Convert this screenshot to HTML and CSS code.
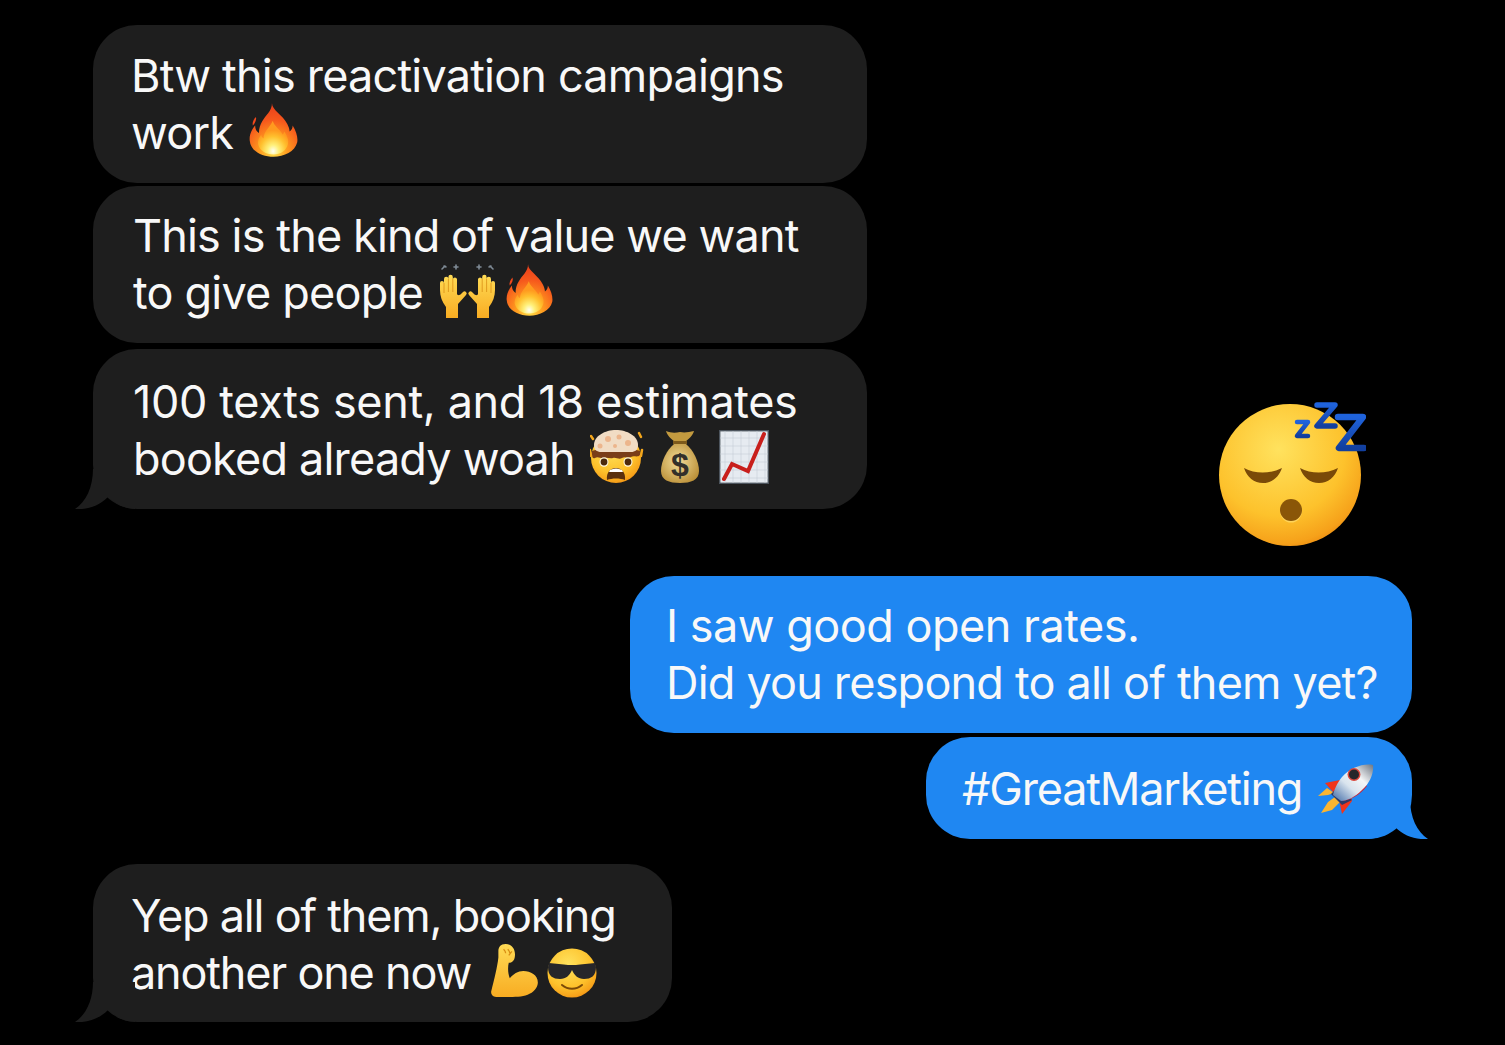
FILE: index.html
```html
<!DOCTYPE html>
<html lang="en">
<head>
  <meta charset="UTF-8">
  <meta name="viewport" content="width=device-width, initial-scale=1.0">
  <title>Messages</title>
  <link rel="stylesheet" href="styles.css">
</head>
<body>

<!-- shared emoji drawings -->
<svg class="defs" aria-hidden="true">
  <defs>
    <radialGradient id="fireOuter" cx="50%" cy="92%" r="95%">
      <stop offset="0" stop-color="#ffe14a"/>
      <stop offset=".3" stop-color="#ff9d1f"/>
      <stop offset=".65" stop-color="#f6581c"/>
      <stop offset="1" stop-color="#e63a1c"/>
    </radialGradient>
    <radialGradient id="fireInner" cx="50%" cy="90%" r="62%">
      <stop offset="0" stop-color="#fffff2"/>
      <stop offset=".3" stop-color="#fff07a"/>
      <stop offset=".7" stop-color="#ffc02e"/>
      <stop offset="1" stop-color="#ff9a1f"/>
    </radialGradient>
    <radialGradient id="face" cx="42%" cy="32%" r="72%">
      <stop offset="0" stop-color="#ffe25e"/>
      <stop offset=".65" stop-color="#fdc22c"/>
      <stop offset=".92" stop-color="#f6a11a"/>
      <stop offset="1" stop-color="#ee8c10"/>
    </radialGradient>
    <linearGradient id="skin" x1="0" y1="0" x2="0" y2="1">
      <stop offset="0" stop-color="#ffdb55"/>
      <stop offset="1" stop-color="#f8ac22"/>
    </linearGradient>
    <radialGradient id="bag" cx="45%" cy="45%" r="65%">
      <stop offset="0" stop-color="#f3dd9a"/>
      <stop offset="1" stop-color="#b98d34"/>
    </radialGradient>
    <linearGradient id="steel" x1="0" y1="1" x2="1" y2="0">
      <stop offset="0" stop-color="#3f6aa6"/>
      <stop offset=".4" stop-color="#d9e4ee"/>
      <stop offset=".65" stop-color="#f5f6f7"/>
      <stop offset="1" stop-color="#6d7682"/>
    </linearGradient>
    <linearGradient id="zzz" x1="0" y1="0" x2="0" y2="1">
      <stop offset="0" stop-color="#1f63dc"/>
      <stop offset="1" stop-color="#123f9e"/>
    </linearGradient>
    <g id="hand">
      <path fill="url(#skin)" d="M7 56V45C3 40 1 34 1 28v-7a2 2 0 0 1 4 0v-4a2.200 2.200 0 0 1 4.400 0v-2a2.200 2.200 0 0 1 4.400 0v2a2.200 2.200 0 0 1 4.200 0v15c1 2 3 1 4 0l2-2a2 2 0 0 1 3 3l-8 9v14z"/>
      <path fill="none" stroke="#d98e14" stroke-width=".8" d="M5 21v10M9.400 17v13M13.800 17v13"/>
    </g>
  </defs>

  <symbol id="i-fire" viewBox="0 0 64 72">
    <path fill="url(#fireOuter)" d="M30 1c0 9 14 15 20 27 2 4 3 7 3 10 3-2 4-5 4-8 5 8 7 16 6 22-3 12-17 19-31 19C16 71 2 63 1 50c-1-8 3-15 7-20 0 5 2 8 5 10 0-12 7-20 12-26 3-4 5-8 5-13z"/>
    <path fill="#f0481c" d="M9 19c1 4-1 8-4 11-1-4 1-8 4-11z"/>
    <path fill="url(#fireInner)" d="M31 24c2 7 9 11 13 18 1-1 2-3 2-4 4 6 6 11 5 16-2 9-10 14-19 14-10 0-18-5-20-13-1-6 2-10 4-13 0 2 1 4 3 5 0-9 9-15 12-23z"/>
  </symbol>

  <symbol id="i-hands" viewBox="0 0 57 56">
    <g fill="none" stroke="#7f8b96" stroke-width="1.600" stroke-linecap="round">
      <path d="M3 7l3-3M5 4l2 1"/>
      <path d="M17 3v4M15 5h4"/>
      <path d="M40 3v4M38 5h4"/>
      <path d="M54 7l-3-3M52 4l-2 1"/>
    </g>
    <use href="#hand"/>
    <use href="#hand" transform="translate(57) scale(-1 1)"/>
  </symbol>

  <symbol id="i-mind" viewBox="0 0 54 54">
    <circle cx="26" cy="28" r="25" fill="url(#face)"/>
    <path fill="#7a3d18" d="M2 21c6-3 42-3 48 0v4c-3 3-6 0-9 2-3 2-6-1-9 1-3 2-6-1-9 0-3 1-6-1-9 0-3 1-6-2-9 0-2 1-3-1-3-3z"/>
    <path fill="#f1dcc4" d="M4 15C4 6 15 0 26 0s22 6 22 15c0 5-3 7-7 7H11c-4 0-7-2-7-7z"/>
    <circle cx="18" cy="9" r="3" fill="#ecb58c"/><circle cx="29" cy="7" r="2.500" fill="#ecb58c"/><circle cx="38" cy="13" r="3" fill="#ecb58c"/><circle cx="10" cy="16" r="2.500" fill="#ecb58c"/><circle cx="25" cy="16" r="2" fill="#ecb58c"/>
    <path d="M1 6l2 3M49 3l2 4M0 20l1 6M52 20l-1 6" stroke="#f3a61c" stroke-width="2.500" stroke-linecap="round"/>
    <ellipse cx="14" cy="32" rx="4.500" ry="4.800" fill="#fff8e0"/><ellipse cx="38" cy="32" rx="4.500" ry="4.800" fill="#fff8e0"/>
    <circle cx="14" cy="32" r="3.400" fill="#4c2a0c"/><circle cx="38" cy="32" r="3.400" fill="#4c2a0c"/>
    <path fill="#5a300e" d="M17 50c-1-8 4-12 9-12s10 4 9 12c-5-2-13-2-18 0z"/>
    <path fill="#fff" d="M20 40c4-2 8-2 12 0l1 2H19z"/>
  </symbol>

  <symbol id="i-chart" viewBox="0 0 50 54">
    <rect x=".7" y=".7" width="48.600" height="52.600" fill="#e6ebf1" stroke="#4d555e" stroke-width="1.400"/>
    <path d="M6 1v52M14 1v52M22 1v52M30 1v52M38 1v52M46 1v52M1 8h48M1 16h48M1 24h48M1 32h48M1 40h48M1 48h48" stroke="#c6ced7" stroke-width=".6"/>
    <path fill="none" stroke="#c81f1c" stroke-width="4" stroke-linecap="round" d="M5 49l8-15 16 7 16-37"/>
  </symbol>

  <symbol id="i-sleep" viewBox="0 -2 147 146">
    <circle cx="71" cy="72" r="71" fill="url(#face)"/>
    <path fill="#7a4a08" d="M25 65c11 6 26 6 38 0-3 9-10 15-19 15-9 0-16-6-19-15z"/>
    <path fill="#7a4a08" d="M81 65c11 6 26 6 38 0-3 9-10 15-19 15-9 0-16-6-19-15z"/>
    <ellipse cx="72" cy="108" rx="11" ry="11.500" fill="#ffd45a"/>
    <ellipse cx="72" cy="107" rx="11" ry="11" fill="#8a5608"/>
    <g fill="none" stroke="url(#zzz)" stroke-linejoin="round" stroke-linecap="round">
      <path stroke-width="4.500" d="M78 19h11L78 33h11"/>
      <path stroke-width="5.500" d="M98 2h18L98 23h18"/>
      <path stroke-width="6.500" d="M119 14h25L120 45h25"/>
    </g>
  </symbol>

  <symbol id="i-rocket" viewBox="0 0 56 52">
    <path fill="#f0341c" d="M7 19l15-3 2 8-9 4zM21 36l12-3 1 4-10 13z"/>
    <path fill="#fbb531" d="M0 32l9-8 7 5-6 2zM3 49l7-11 7-5 5 5-8 8z"/>
    <path fill="#2f3a66" d="M13 30l7-7 14 13-10 5z"/>
    <path fill="#c8263a" d="M24 37c9-1 18-6 25-15l-4-4-23 15z"/>
    <path fill="url(#steel)" d="M55 1c-10-2-23 3-31 12-5 6-8 13-9 18l8 6c6 0 14-4 21-11C52 19 56 9 55 1z"/>
    <circle cx="36" cy="10.500" r="6.500" fill="#d9463c"/>
    <circle cx="36" cy="10.500" r="5" fill="#26262a"/>
  </symbol>

  <symbol id="i-muscle" viewBox="0 0 46 52">
    <path fill="url(#skin)" d="M14 0C9 0 7 3 7 7v6C6 22 3 34 0 46c0 4 3 5 6 5 12 0 24 1 31-3 6-3 8-8 8-11 0-7-7-11-14-11-5 0-10 3-13 7-2-5-2-11-1-15 4 0 6-3 6-8 0-6-4-10-9-10z"/>
    <path fill="none" stroke="#d98e14" stroke-width="1.200" d="M12 5c1 1 2 3 2 4M16 5c1 1 2 3 2 4M20 7l-3 4"/>
  </symbol>

  <symbol id="i-cool" viewBox="0 0 50 50">
    <circle cx="25" cy="25" r="24.500" fill="url(#face)"/>
    <path fill="#26262a" d="M2 15c6 1 14 1 19 2h8c5-1 13-1 19-2l1 4c0 9-5 12-12 12-6 0-10-4-12-9-2 5-6 9-12 9-7 0-12-3-12-12z"/>
    <path fill="none" stroke="#7a4a08" stroke-width="2" stroke-linecap="round" d="M15 37c6 5 14 5 20 0"/>
  </symbol>

  <symbol id="i-tail" viewBox="0 0 60 40">
    <path d="M18 0C18 18 11 33 0 40c12 1 24-3 33-12 8 7 17 12 27 12V0z"/>
  </symbol>
</svg>

<main class="thread">
  <div class="top-row">
    <div class="stack">
      <div class="bubble grey w-full first">
        Btw this reactivation campaigns<br>
        work <svg class="em fire-a"><use href="#i-fire"/></svg>
      </div>
      <div class="bubble grey w-full second">
        <span class="tight">This is the kind of value we want</span><br>
        to give people <svg class="em hands"><use href="#i-hands"/></svg><svg class="em fire-b"><use href="#i-fire"/></svg>
      </div>
      <div class="bubble grey w-full third">
        <span class="loose">100 texts sent, and 18 estimates</span><br>
        booked already woah <svg class="em mind"><use href="#i-mind"/></svg><svg class="em money" viewBox="0 0 40 54">
          <path fill="#c39a3f" d="M6 1c5 2 9 2 14 1 5 1 9 0 14-1-1 4-5 8-9 11H15C11 9 7 5 6 1z"/>
          <path fill="#7d5a1c" d="M13 11h14v3H13z"/>
          <path fill="url(#bag)" d="M14 14h12c7 6 13 17 13 27 0 9-8 12-19 12S1 50 1 41c0-10 6-21 13-27z"/>
          <text class="money-sign" x="20" y="46" text-anchor="middle">$</text>
        </svg><svg class="em chart"><use href="#i-chart"/></svg>
        <svg class="tail"><use href="#i-tail"/></svg>
      </div>
    </div>
    <svg class="big-emoji" role="img" aria-label="sleeping face"><use href="#i-sleep"/></svg>
  </div>

  <div class="mine">
    <div class="bubble blue w-open">
      <span class="wider">I saw good open rates.</span><br>
      Did you respond to all of them yet?
    </div>
    <div class="bubble blue w-tag">
      #GreatMarketing <svg class="em rocket"><use href="#i-rocket"/></svg>
      <svg class="tail tail-right"><use href="#i-tail"/></svg>
    </div>
  </div>

  <div class="bubble grey w-last">
    Yep all of them, booking<br>
    another one now <svg class="em muscle"><use href="#i-muscle"/></svg><svg class="em cool"><use href="#i-cool"/></svg>
    <svg class="tail"><use href="#i-tail"/></svg>
  </div>
</main>

</body>
</html>
```

FILE: styles.css
```css
/* page */
body {
  margin: 0;
  background-color: #000;
  color: #f8f8f8;
  font-family: Inter, "Liberation Sans", sans-serif;
  font-size: 45px;
  letter-spacing: -0.8px;
  line-height: 57px;
  overflow: hidden;
}

.defs {
  position: absolute;
  width: 0;
  height: 0;
}

.thread {
  display: flex;
  flex-direction: column;
  padding: 25px 93px 0;
  height: 1020px;
}

.top-row {
  display: flex;
  justify-content: space-between;
}

.stack {
  display: flex;
  flex-direction: column;
  padding-bottom: 38px;
}

.big-emoji {
  align-self: flex-end;
  width: 147px;
  height: 146px;
  margin-right: 46px;
}

.mine {
  display: flex;
  flex-direction: column;
  align-items: flex-end;
  gap: 4px;
  margin-top: 29px;
}

/* bubbles */
.bubble {
  position: relative;
  box-sizing: border-box;
  border-radius: 44px;
  white-space: nowrap;
}

.grey {
  background-color: #1e1e1e;
  fill: #1e1e1e;
}

.blue {
  background-color: #1f87f2;
  fill: #1f87f2;
}

.w-full {
  width: 774px;
}

.first {
  padding: 22px 38px 22px;
}

.second {
  margin-top: 3px;
  padding: 21px 40px 22px;
}

.third {
  margin-top: 6px;
  padding: 24px 40px 22px;
}

.tight {
  letter-spacing: -0.87px;
}

.loose {
  letter-spacing: -0.35px;
}

.wider {
  letter-spacing: -0.5px;
}

.w-open {
  width: 782px;
  padding: 21px 36px 22px;
}

.w-tag {
  width: 486px;
  padding: 23px 36px 22px;
  letter-spacing: -1.2px;
}

.w-last {
  align-self: flex-start;
  width: 579px;
  margin-top: 25px;
  padding: 23px 38px 21px;
  letter-spacing: -1.2px;
}

.tail {
  position: absolute;
  left: -18px;
  bottom: 0;
  width: 60px;
  height: 40px;
}

.tail-right {
  left: auto;
  right: -16px;
  transform: scaleX(-1);
}

/* inline emoji */
.em {
  vertical-align: 5px;
  margin-block: -14px;
}

.fire-a {
  width: 49px;
  height: 56px;
  margin-left: 4px;
}

.hands {
  width: 57px;
  height: 56px;
  margin-left: 4px;
}

.fire-b {
  width: 47px;
  height: 56px;
  margin-left: 10px;
}

.mind {
  width: 54px;
  height: 54px;
  margin-left: 3px;
}

.money {
  width: 40px;
  height: 54px;
  margin-left: 16px;
}

.chart {
  width: 50px;
  height: 54px;
  margin-left: 19px;
}

.rocket {
  width: 56px;
  height: 52px;
  margin-left: 4px;
  vertical-align: 3px;
}

.muscle {
  width: 48px;
  height: 54px;
  margin-left: 8px;
}

.cool {
  width: 50px;
  height: 50px;
  margin-left: 8px;
}

.money-sign {
  font-family: "Liberation Sans", sans-serif;
  font-size: 32px;
  font-weight: 700;
  letter-spacing: 0;
  fill: #33302a;
}
```
